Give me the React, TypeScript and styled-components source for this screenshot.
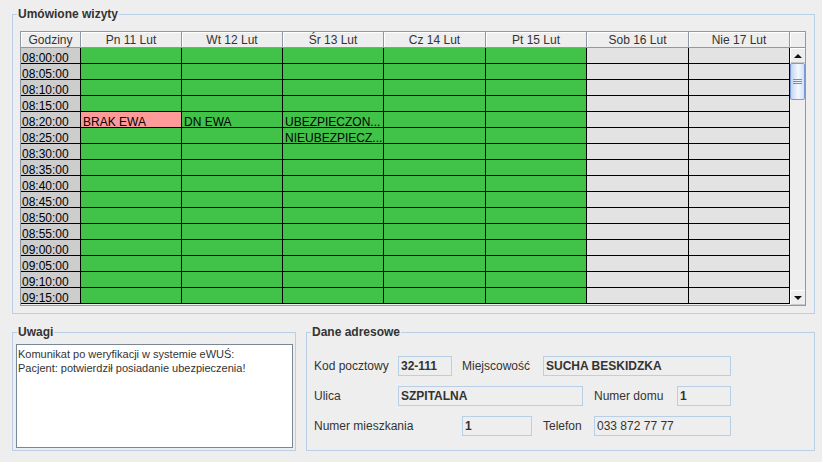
import * as React from 'react'
import styled, { createGlobalStyle } from 'styled-components'

type Kind = 'hour' | 'free' | 'busy' | 'off'

type Visit = {
  text: string
  kind?: Kind
}

const days = [
  'Pn 11 Lut',
  'Wt 12 Lut',
  'Śr 13 Lut',
  'Cz 14 Lut',
  'Pt 15 Lut',
  'Sob 16 Lut',
  'Nie 17 Lut',
]
const widths = [101, 101, 101, 102, 101, 102, 101]

const hours: string[] = []
for (let m = 8 * 60; m <= 9 * 60 + 15; m += 5) {
  const h = String(Math.floor(m / 60)).padStart(2, '0')
  const mm = String(m % 60).padStart(2, '0')
  hours.push(`${h}:${mm}:00`)
}

const visits: Record<string, Visit> = {
  '08:20:00-0': { text: 'BRAK EWA', kind: 'busy' },
  '08:20:00-1': { text: 'DN EWA' },
  '08:20:00-2': { text: 'UBEZPIECZON...' },
  '08:25:00-2': { text: 'NIEUBEZPIECZ...' },
}

const colors: Record<Kind, string> = {
  hour: '#cdcdcd',
  free: '#41c349',
  busy: '#ff9a9a',
  off: '#e3e3e3',
}

const App: React.FC = () => {
  return (
    <Page>
      <GlobalStyle />
      <Group $height={300}>
        <Title>Umówione wizyty</Title>
        <Pane>
          <HeadRow>
            <HeadCell>Godziny</HeadCell>
            {days.map(d => (
              <HeadCell key={d}>{d}</HeadCell>
            ))}
          </HeadRow>
          <Corner />
          <Body>
            {hours.map(h => (
              <React.Fragment key={h}>
                <Cell $kind="hour">{h}</Cell>
                {days.map((d, i) => {
                  const v = visits[`${h}-${i}`]
                  const kind: Kind = v?.kind ?? (i > 4 ? 'off' : 'free')
                  return (
                    <Cell key={d} $kind={kind}>
                      {v?.text}
                    </Cell>
                  )
                })}
              </React.Fragment>
            ))}
          </Body>
          <ScrollBar>
            <ArrowButton>
              <Arrow $up />
            </ArrowButton>
            <Thumb>
              <Grip />
              <Grip />
              <Grip />
            </Thumb>
            <Track />
            <ArrowButton>
              <Arrow />
            </ArrowButton>
          </ScrollBar>
        </Pane>
      </Group>

      <BottomRow>
        <Group $width={284}>
          <Title>Uwagi</Title>
          <Memo>
            Komunikat po weryfikacji w systemie eWUŚ:
            <br />
            Pacjent: potwierdził posiadanie ubezpieczenia!
          </Memo>
        </Group>
        <Group $width={509}>
          <Title>Dane adresowe</Title>
          <Form>
            <FormRow>
              <Label $width={84}>Kod pocztowy</Label>
              <Field $width={54} $bold>32-111</Field>
              <Label $width={81} $gap={10}>Miejscowość</Label>
              <Field $width={188} $bold>SUCHA BESKIDZKA</Field>
            </FormRow>
            <FormRow>
              <Label $width={84}>Ulica</Label>
              <Field $width={185} $bold>SZPITALNA</Field>
              <Label $width={83} $gap={11}>Numer domu</Label>
              <Field $width={54} $bold>1</Field>
            </FormRow>
            <FormRow>
              <Label $width={148}>Numer mieszkania</Label>
              <Field $width={70} $bold>1</Field>
              <Label $width={51} $gap={11}>Telefon</Label>
              <Field $width={137}>033 872 77 77</Field>
            </FormRow>
          </Form>
        </Group>
      </BottomRow>
    </Page>
  )
}

const GlobalStyle = createGlobalStyle`
  html, body {
    margin: 0;
    padding: 0;
    background: #eeeeee;
  }
  body {
    font-family: 'Liberation Sans', Arial, sans-serif;
    font-size: 12px;
    color: #333333;
  }
`

const Page = styled.div`
  width: 822px;
  height: 462px;
  box-sizing: border-box;
  padding: 14px 7px 0 12px;
  display: flex;
  flex-direction: column;
`
const Group = styled.div<{ $height?: number; $width?: number }>`
  box-sizing: border-box;
  border: 1px solid #b8cfe5;
  display: flex;
  flex-direction: column;
  ${p => (p.$height ? `height: ${p.$height}px;` : '')}
  ${p => (p.$width ? `width: ${p.$width}px;` : '')}
`
const Title = styled.div`
  align-self: flex-start;
  margin: -8px 0 0 4px;
  padding: 0 1px;
  background: #eeeeee;
  font-weight: bold;
  font-size: 12px;
  line-height: 14px;
  color: #333333;
`
const Pane = styled.div`
  margin: 10px 8px 0 7px;
  height: 275px;
  box-sizing: border-box;
  border: 1px solid #8e99a5;
  display: grid;
  grid-template-columns: 769px 15px;
  grid-template-rows: 16px 257px;
  background: #eeeeee;
`
const columns = `60px ${widths.map(w => `${w}px`).join(' ')}`
const HeadRow = styled.div`
  display: grid;
  grid-template-columns: ${columns};
`
const HeadCell = styled.div`
  box-sizing: border-box;
  height: 16px;
  border-right: 1px solid #8e99a5;
  border-bottom: 1px solid #8e99a5;
  box-shadow: inset 1px 1px 0 #ffffff;
  text-align: center;
  font-size: 12px;
  line-height: 15px;
  padding-top: 1px;
  color: #333333;
  white-space: nowrap;
  overflow: hidden;
`
const Corner = styled.div`
  box-sizing: border-box;
  border-bottom: 1px solid #8e99a5;
  box-shadow: inset 1px 1px 0 #ffffff;
`
const Body = styled.div`
  display: grid;
  grid-template-columns: ${columns};
  grid-auto-rows: 16px;
  overflow: hidden;
`
const Cell = styled.div<{ $kind: Kind }>`
  box-sizing: border-box;
  border-right: 1px solid #000000;
  border-bottom: 1px solid #000000;
  background: ${p => colors[p.$kind]};
  padding: 4px 0 0 ${p => (p.$kind === 'hour' ? 1 : 2)}px;
  font-size: 12px;
  line-height: 12px;
  color: #000000;
  white-space: nowrap;
  overflow: hidden;
`
const ScrollBar = styled.div`
  display: flex;
  flex-direction: column;
  background: #eeeeee;
`
const ArrowButton = styled.div`
  box-sizing: border-box;
  height: 15px;
  display: flex;
  align-items: center;
  justify-content: center;
  background: #eeeeee;
  border-top: 1px solid #ffffff;
  border-left: 1px solid #ffffff;
  border-bottom: 1px solid #c4c9ce;
`
const Arrow = styled.div<{ $up?: boolean }>`
  width: 0;
  height: 0;
  border-left: 4px solid transparent;
  border-right: 4px solid transparent;
  ${p =>
    p.$up
      ? 'border-bottom: 4px solid #111111;'
      : 'border-top: 4px solid #111111;'}
`
const Thumb = styled.div`
  box-sizing: border-box;
  height: 37px;
  border: 1px solid #7c9bd2;
  border-radius: 2px;
  background: linear-gradient(to right, #c3d4ef, #f4f8fe 55%, #d3e0f4);
  display: flex;
  flex-direction: column;
  align-items: center;
  justify-content: center;
  gap: 1px;
`
const Grip = styled.div`
  width: 9px;
  height: 1px;
  background: #6f8fc8;
`
const Track = styled.div`
  flex: 1;
`
const BottomRow = styled.div`
  margin-top: 18px;
  height: 119px;
  display: flex;
  gap: 10px;
`
const Memo = styled.div`
  flex: 1;
  margin: 5px 2px 2px 3px;
  box-sizing: border-box;
  border: 1px solid #7a8794;
  background: #ffffff;
  padding: 2px 1px;
  font-size: 11px;
  line-height: 14px;
  color: #333333;
`
const Form = styled.div`
  margin-top: 17px;
  padding-left: 7px;
  display: flex;
  flex-direction: column;
  gap: 10px;
`
const FormRow = styled.div`
  display: flex;
  align-items: center;
  height: 20px;
`
const Label = styled.div<{ $width: number; $gap?: number }>`
  width: ${p => p.$width}px;
  margin-left: ${p => p.$gap ?? 0}px;
  font-size: 12px;
  color: #333333;
  white-space: nowrap;
`
const Field = styled.div<{ $width: number; $bold?: boolean }>`
  box-sizing: border-box;
  width: ${p => p.$width}px;
  height: 20px;
  border: 1px solid #b8cfe5;
  padding: 1px 0 0 2px;
  line-height: 17px;
  font-size: 12px;
  font-weight: ${p => (p.$bold ? 'bold' : 'normal')};
  color: #333333;
  white-space: nowrap;
  overflow: hidden;
`

export default App
